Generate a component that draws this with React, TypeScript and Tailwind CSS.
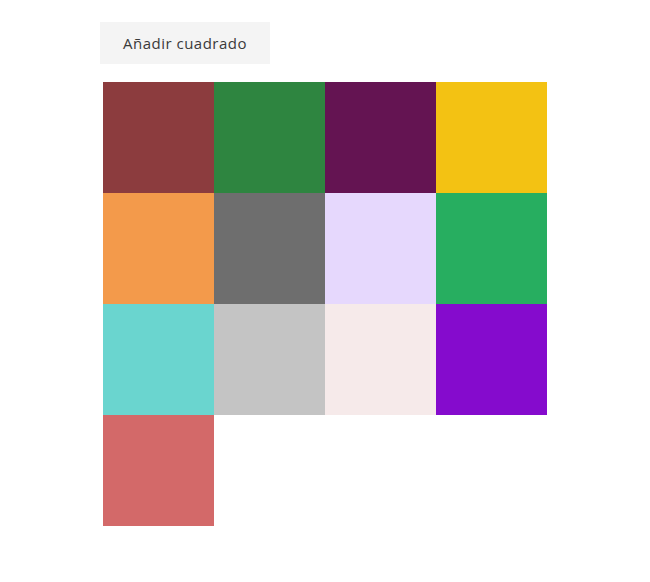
const colors = [
  '#8c3c3e',
  '#2e8540',
  '#641452',
  '#f3c213',
  '#f39a4b',
  '#6e6e6e',
  '#e6d8fd',
  '#27ae60',
  '#6ad5cf',
  '#c4c4c4',
  '#f6eaea',
  '#850bcd',
  '#d36969',
]

export default function App() {
  return (
    <main className="min-h-screen bg-white pl-[100px] pt-[22px] font-['Open_Sans','Lato',sans-serif]">
      <button
        type="button"
        className="h-[42px] w-[170px] bg-[#f4f4f4] text-[15px] tracking-[0.5px] text-[#3a3a3a]"
      >
        Añadir cuadrado
      </button>

      <div className="ml-[3px] mt-[18px] flex w-[444px] flex-wrap">
        {colors.map((c) => (
          <div key={c} className="h-[111px] w-[111px]" style={{ backgroundColor: c }} />
        ))}
      </div>
    </main>
  )
}
